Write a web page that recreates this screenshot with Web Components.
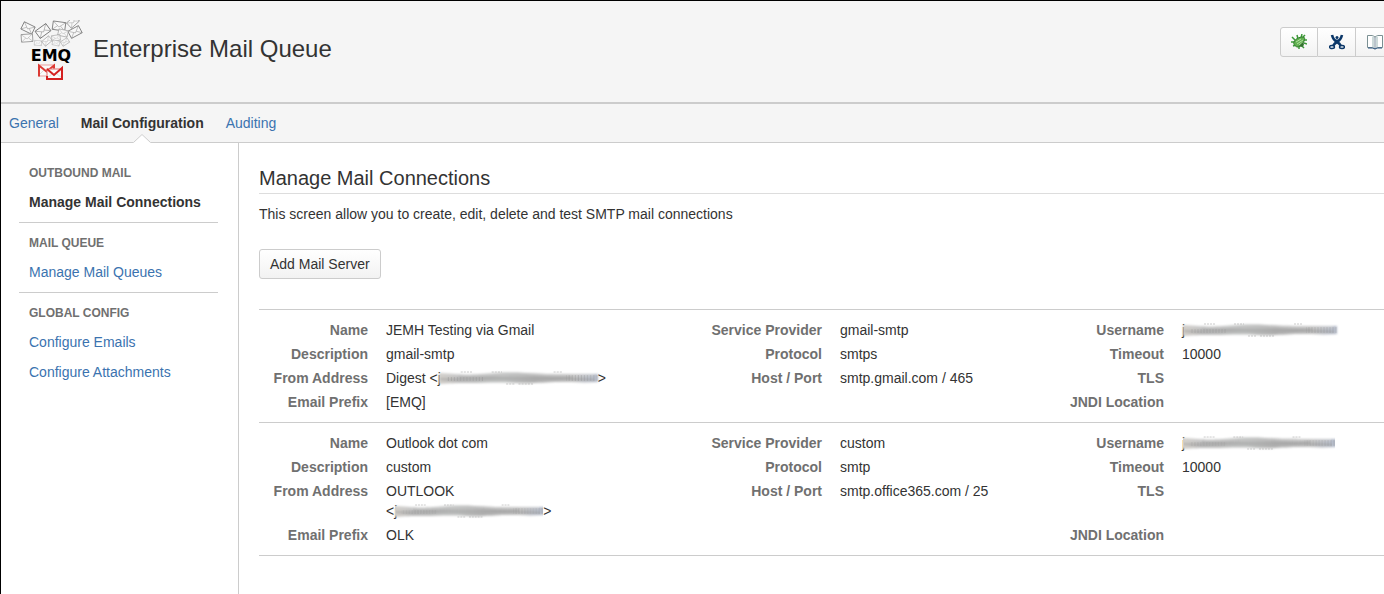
<!DOCTYPE html>
<html lang="en">
<head>
<meta charset="utf-8">
<title>Enterprise Mail Queue</title>
<style>
  body {
    margin: 0;
    background: #fff;
    color: #333;
    font: 14px/20px "Liberation Sans", Arial, sans-serif;
  }
</style>
</head>
<body>
<emq-app>
  <emq-header slot="header" data-title="Enterprise Mail Queue"></emq-header>
  <emq-tabs slot="tabs" data-tabs="General,Mail Configuration,Auditing" data-active="Mail Configuration"></emq-tabs>
  <nav-group slot="sidebar" data-heading="Outbound Mail" data-items="Manage Mail Connections" data-active="Manage Mail Connections"></nav-group>
  <nav-group slot="sidebar" data-heading="Mail Queue" data-items="Manage Mail Queues"></nav-group>
  <nav-group slot="sidebar" data-heading="Global Config" data-items="Configure Emails,Configure Attachments"></nav-group>
  <connections-panel data-heading="Manage Mail Connections">
    <span slot="intro">This screen allow you to create, edit, delete and test SMTP mail connections</span>
    <mail-connection data-provider="gmail-smtp" data-protocol="smtps" data-host="smtp.gmail.com / 465" data-timeout="10000">
      <span slot="name">JEMH Testing via Gmail</span>
      <span slot="description">gmail-smtp</span>
      <span slot="from">Digest &lt;j<masked-text data-width="158"></masked-text>&gt;</span>
      <span slot="prefix">[EMQ]</span>
      <span slot="username">j<masked-text data-width="153"></masked-text></span>
    </mail-connection>
    <mail-connection data-provider="custom" data-protocol="smtp" data-host="smtp.office365.com / 25" data-timeout="10000">
      <span slot="name">Outlook dot com</span>
      <span slot="description">custom</span>
      <span slot="from">OUTLOOK &lt;j<masked-text data-width="147"></masked-text>&gt;</span>
      <span slot="prefix">OLK</span>
      <span slot="username">j<masked-text data-width="151"></masked-text></span>
    </mail-connection>
  </connections-panel>
</emq-app>

<script>
class EmqApp extends HTMLElement {
  constructor() {
    super();
    this.attachShadow({ mode: "open" }).innerHTML = `
      <style>
        :host {
          display: flex;
          flex-direction: column;
          box-sizing: border-box;
          min-height: 100vh;
          border-top: 1px solid #000;
          border-left: 1px solid #000;
          overflow-x: hidden;
        }
        .body { display: flex; flex: 1; }
        aside {
          box-sizing: border-box;
          flex: 0 0 238px;
          padding: 20px 20px 20px 18px;
          border-right: 1px solid #ccc;
        }
        main { flex: 1; min-width: 0; padding: 20px 0 20px 20px; }
      </style>
      <slot name="header"></slot>
      <slot name="tabs"></slot>
      <div class="body">
        <aside><slot name="sidebar"></slot></aside>
        <main><slot></slot></main>
      </div>
    `;
  }
}

class EmqLogo extends HTMLElement {
  constructor() {
    super();
    // x, y, angle, scale, stroke
    const envelopes = [
      [9, 8, 26, 1, "#777"],
      [8, 18, -4, 0.95, "#888"],
      [19, 23, 4, 0.6, "#aaa"],
      [24, 11, -36, 1.1, "#777"],
      [40, 6, 8, 1.05, "#777"],
      [54, 2, -42, 0.9, "#888"],
      [56, 12, -28, 1, "#777"],
      [44, 13, 12, 0.8, "#999"],
      [28, 21, -40, 0.75, "#999"],
      [37, 18, -8, 0.7, "#999"],
      [37, 23, 12, 0.6, "#aaa"],
      [46, 22, -32, 0.65, "#999"],
    ];
    const drawn = envelopes
      .map(([x, y, angle, scale, stroke]) => `
        <g transform="translate(${x} ${y}) rotate(${angle}) scale(${scale})" fill="#f8f8f8" stroke="${stroke}" stroke-width=".8">
          <rect x="-6" y="-4" width="12" height="8"/>
          <path d="M-6-4 0 1 6-4M-6 4-1.5 0M6 4 1.5 0" fill="none" stroke-width=".5" opacity=".8"/>
        </g>`)
      .join("");

    this.attachShadow({ mode: "open" }).innerHTML = `
      <style>
        :host { display: block; width: 64px; height: 64px; }
        svg { display: block; }
        text { font: bold 16px "DejaVu Sans", sans-serif; fill: #000; }
      </style>
      <svg width="64" height="64" viewBox="0 0 64 64">
        <svg y="3" width="64" height="30" viewBox="0 0 64 30">${drawn}</svg>
        <text x="32" y="44" text-anchor="middle">EMQ</text>
        <rect x="20" y="48" width="15" height="11" fill="#fafafa" stroke="#e9a0a0"/>
        <path d="m20 58 5-5M35 58l-5-5" stroke="#ddd"/>
        <path d="M20 59.500V48.500l7.500 6 7.500-6v3" fill="none" stroke="#dc3a34" stroke-width="2"/>
        <rect x="28" y="52" width="15" height="10" fill="#fafafa" stroke="#e07070"/>
        <path d="m28 61 5-4M43 61l-5-4" stroke="#ddd"/>
        <path d="m28 52 7 6 8-7v11H28v-3" fill="none" stroke="#d42020" stroke-width="2"/>
      </svg>
    `;
  }
}

class EmqToolbar extends HTMLElement {
  constructor() {
    super();
    this.attachShadow({ mode: "open" }).innerHTML = `
      <style>
        :host { display: flex; }
        button {
          display: flex;
          align-items: center;
          justify-content: center;
          box-sizing: border-box;
          width: 38px;
          height: 30px;
          padding: 0;
          border: 1px solid #ccc;
          border-left-width: 0;
          background: linear-gradient(#fff, #f2f2f2);
        }
        button:first-of-type { border-left-width: 1px; border-radius: 3px 0 0 3px; }
        button:last-of-type { border-radius: 0 3px 3px 0; }
      </style>
      <button type="button" aria-label="Report a bug">
        <svg width="16" height="16" viewBox="0 0 16 16">
          <path d="M4 6 1 3M4 8H0M5 11l-3 1M7 5 6 1M10 4l1-4M12 3l2-2M13 6h3M13 9l3 1M11 12l2 2M8 12v3" stroke="#3c9a38" stroke-width="1.500" fill="none"/>
          <path d="M3 8c1-3 5-5 9-5 2 0 2 2 1 4-1 4-4 6-7 6-2-1-4-3-3-5z" fill="#62b152" stroke="#2f7d2b"/>
          <path d="m5 8 5-3M6 10l6-4M8 11l4-3" stroke="#b4dfa0" fill="none"/>
          <path d="m8 12 4-4 1 3-2 2z" fill="#33702f"/>
        </svg>
      </button>
      <button type="button" aria-label="Project">
        <svg width="16" height="16" viewBox="0 0 16 16" fill="none" stroke="#0b3768">
          <path d="M3 1c1 4 3 6 5 7s3 2 4 4M13 1c-1 4-3 6-5 7s-3 2-4 4" stroke-width="2.600"/>
          <circle cx="8" cy="3.500" r="1.500" fill="#0b3768" stroke="none"/>
          <path d="M5 6h6L8 9z" fill="#0b3768"/>
          <ellipse cx="3" cy="13" rx="2.500" ry="1.500" stroke-width="1.400"/>
          <ellipse cx="13" cy="13" rx="2.500" ry="1.500" stroke-width="1.400"/>
        </svg>
      </button>
      <button type="button" aria-label="Documentation">
        <svg width="16" height="16" viewBox="0 0 16 16">
          <path d="M.5 1.500h5L8 3l2.500-1.500h5v12h-5L8 15l-2.500-1.500h-5z" fill="#fff" stroke="#7b9093"/>
          <path d="M6 2.500v11M10 2.500v11" stroke="#ccd9d9" stroke-width="2"/>
          <path d="M8 3v11" stroke="#789"/>
          <path d="M1 14h5l2 1 2-1h5" fill="none" stroke="#2d5580"/>
        </svg>
      </button>
    `;
  }
}

class EmqHeader extends HTMLElement {
  constructor() {
    super();
    this.attachShadow({ mode: "open" }).innerHTML = `
      <style>
        :host {
          display: flex;
          align-items: flex-start;
          gap: 10px;
          padding: 16px 0 21px 18px;
          background: #f5f5f5;
          border-bottom: 2px solid #ccc;
        }
        h1 { flex: 1; margin: 16px 0 0; font-size: 24px; line-height: 32px; font-weight: normal; }
        /* the button group runs past the window edge */
        emq-toolbar { margin: 10px -10px 0 0; }
      </style>
      <emq-logo></emq-logo>
      <h1></h1>
      <emq-toolbar></emq-toolbar>
    `;
  }

  connectedCallback() {
    this.shadowRoot.querySelector("h1").textContent = this.getAttribute("data-title");
  }
}

class EmqTabs extends HTMLElement {
  constructor() {
    super();
    this.attachShadow({ mode: "open" });
  }

  connectedCallback() {
    const active = this.getAttribute("data-active");
    const tabs = this.getAttribute("data-tabs").split(",");
    this.shadowRoot.innerHTML = `
      <style>
        :host { display: block; background: #f5f5f5; border-bottom: 1px solid #ccc; }
        nav { display: flex; gap: 22px; padding-left: 8px; }
        a { position: relative; padding: 9px 0; color: #3b73af; text-decoration: none; }
        a[aria-current] { color: #333; font-weight: bold; }
        svg { position: absolute; left: 50%; bottom: -1px; margin-left: -9px; }
      </style>
      <nav>
        ${tabs.map((tab) => tab === active
          ? `<a href="#" aria-current="page">${tab}<svg width="18" height="9" viewBox="0 0 18 9"><path d="M0 9 9 0l9 9z" fill="#fff"/><path d="M.5 8.500 9 .5l8.500 8" fill="none" stroke="#ccc"/></svg></a>`
          : `<a href="#">${tab}</a>`).join("")}
      </nav>
    `;
  }
}

class NavGroup extends HTMLElement {
  constructor() {
    super();
    this.attachShadow({ mode: "open" });
  }

  connectedCallback() {
    const active = this.getAttribute("data-active");
    const items = this.getAttribute("data-items").split(",");
    this.shadowRoot.innerHTML = `
      <style>
        :host { display: block; margin-bottom: 10px; padding: 0 10px 5px; border-bottom: 1px solid #ccc; }
        :host(:last-of-type) { border-bottom: 0; }
        h3 { margin: 0 0 4px; color: #707070; font-size: 12px; line-height: 20px; text-transform: uppercase; }
        ul { margin: 0; padding: 0; list-style: none; }
        a { display: block; line-height: 30px; color: #3b73af; text-decoration: none; white-space: nowrap; }
        a[aria-current] { color: #333; font-weight: bold; }
      </style>
      <h3>${this.getAttribute("data-heading")}</h3>
      <ul>
        ${items.map((item) => `<li><a href="#"${item === active ? ' aria-current="page"' : ""}>${item}</a></li>`).join("")}
      </ul>
    `;
  }
}

class ConnectionsPanel extends HTMLElement {
  constructor() {
    super();
    this.attachShadow({ mode: "open" }).innerHTML = `
      <style>
        :host { display: block; }
        h2 { margin: 0; border-bottom: 1px solid #ddd; font-size: 20px; line-height: 30px; font-weight: normal; }
        p { margin: 10px 0 25px; }
        button {
          display: block;
          box-sizing: border-box;
          height: 30px;
          padding: 0 10px;
          border: 1px solid #ccc;
          border-radius: 3px;
          background: linear-gradient(#fff, #f2f2f2);
          color: #333;
          font: inherit;
        }
        .list { margin-top: 30px; border-top: 1px solid #ccc; }
      </style>
      <h2></h2>
      <p><slot name="intro"></slot></p>
      <button type="button">Add Mail Server</button>
      <div class="list"><slot></slot></div>
    `;
  }

  connectedCallback() {
    this.shadowRoot.querySelector("h2").textContent = this.getAttribute("data-heading");
  }
}

class MailConnection extends HTMLElement {
  constructor() {
    super();
    this.attachShadow({ mode: "open" });
  }

  connectedCallback() {
    const { provider, protocol, host, timeout } = this.dataset;
    this.shadowRoot.innerHTML = `
      <style>
        :host { display: block; border-bottom: 1px solid #ccc; }
        dl {
          display: grid;
          grid-template-columns: 109px 228fr 190fr 190fr 116fr 202fr;
          gap: 4px 18px;
          margin: 0;
          padding: 10px 0;
        }
        dt { color: #707070; font-weight: bold; text-align: right; white-space: nowrap; }
        dd { margin: 0; min-width: 0; }
      </style>
      <dl>
        <dt>Name</dt><dd><slot name="name"></slot></dd>
        <dt>Service Provider</dt><dd>${provider}</dd>
        <dt>Username</dt><dd><slot name="username"></slot></dd>
        <dt>Description</dt><dd><slot name="description"></slot></dd>
        <dt>Protocol</dt><dd>${protocol}</dd>
        <dt>Timeout</dt><dd>${timeout}</dd>
        <dt>From Address</dt><dd><slot name="from"></slot></dd>
        <dt>Host / Port</dt><dd>${host}</dd>
        <dt>TLS</dt><dd></dd>
        <dt>Email Prefix</dt><dd><slot name="prefix"></slot></dd>
        <dt></dt><dd></dd>
        <dt>JNDI Location</dt><dd></dd>
      </dl>
    `;
  }
}

// smudge drawn over an address that must not be readable
class MaskedText extends HTMLElement {
  constructor() {
    super();
    this.attachShadow({ mode: "open" });
  }

  connectedCallback() {
    const width = parseInt(this.getAttribute("data-width"));
    this.shadowRoot.innerHTML = `
      <style>
        :host { display: inline; white-space: nowrap; }
        svg { display: inline-block; margin-left: -3px; margin-right: -1px; vertical-align: -3px; overflow: visible; }
      </style>&#8288;<svg width="${width + 3}" height="16" viewBox="0 0 156 16" preserveAspectRatio="none" aria-hidden="true">
        <defs>
          <filter id="soft" x="-5%" y="-30%" width="110%" height="160%"><feGaussianBlur stdDeviation=".8"/></filter>
          <linearGradient id="tone">
            <stop offset="0" stop-color="#d2cec8"/><stop offset=".12" stop-color="#bcbcbc"/>
            <stop offset=".4" stop-color="#bfc1c0"/><stop offset=".6" stop-color="#b2b2b2"/>
            <stop offset=".85" stop-color="#c0c0c0"/><stop offset="1" stop-color="#b5bccb"/>
          </linearGradient>
          <pattern id="teeth" width="3" height="14" patternUnits="userSpaceOnUse"><path d="M1 0v14" stroke="#858585" stroke-width=".8"/></pattern>
        </defs>
        <g filter="url(#soft)">
          <path d="M1 3c16 1 24 2 40 1s26-2 43-1 28 1 38 1 20 0 33 0v8c-14 1-24 0-38 0s-24 2-42 1-30 0-44 0-20 0-30 1z" fill="url(#tone)"/>
          <path d="M2 9c24 2 46-1 76 0s50-1 74 1M20 7c28 1 40-2 62-1s30 2 48 1" fill="none" stroke="#9c9c9c"/>
          <path d="M3 5c26 2 48 0 72 0s50 1 76 0" fill="none" stroke="#d6d6d6"/>
        </g>
        <path d="M22 2h12M52 2h10M112 2h8M66 14h8M78 14h14" stroke="#999" stroke-dasharray="2 1" opacity=".5"/>
        <path d="M8 7h36v4H8zM124 5h31v6h-31z" fill="url(#teeth)" opacity=".35"/>
      </svg>&#8288;
    `.trim();
  }
}

customElements.define("emq-logo", EmqLogo);
customElements.define("emq-toolbar", EmqToolbar);
customElements.define("emq-header", EmqHeader);
customElements.define("emq-tabs", EmqTabs);
customElements.define("nav-group", NavGroup);
customElements.define("masked-text", MaskedText);
customElements.define("mail-connection", MailConnection);
customElements.define("connections-panel", ConnectionsPanel);
customElements.define("emq-app", EmqApp);
</script>
</body>
</html>
